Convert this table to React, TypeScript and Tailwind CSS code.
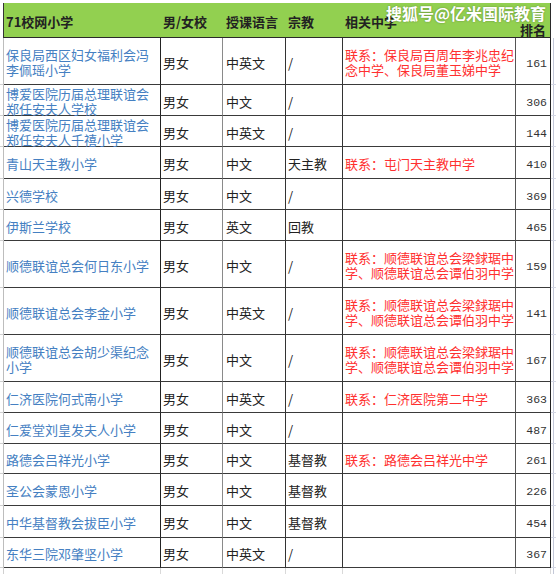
import React from 'react';

type Row = {
  name: string[];
  lang: string;
  rel: string;
  link?: string[];
  rank: string;
  h: string;
};

const rows: Row[] = [
  { name: ['保良局西区妇女福利会冯', '李佩瑶小学'], lang: '中英文', rel: '/', link: ['联系：保良局百周年李兆忠纪', '念中学、保良局董玉娣中学'], rank: '161', h: 'h-[47px]' },
  { name: ['博爱医院历届总理联谊会', '郑任安夫人学校'], lang: '中文', rel: '/', rank: '306', h: 'h-[31px]' },
  { name: ['博爱医院历届总理联谊会', '郑任安夫人千禧小学'], lang: '中英文', rel: '/', rank: '144', h: 'h-[31px]' },
  { name: ['青山天主教小学'], lang: '中文', rel: '天主教', link: ['联系：屯门天主教中学'], rank: '410', h: 'h-[32px]' },
  { name: ['兴德学校'], lang: '中文', rel: '/', rank: '369', h: 'h-[31px]' },
  { name: ['伊斯兰学校'], lang: '英文', rel: '回教', rank: '465', h: 'h-[31px]' },
  { name: ['顺德联谊总会何日东小学'], lang: '中文', rel: '/', link: ['联系：顺德联谊总会梁銶琚中', '学、顺德联谊总会谭伯羽中学'], rank: '159', h: 'h-[47px]' },
  { name: ['顺德联谊总会李金小学'], lang: '中英文', rel: '/', link: ['联系：顺德联谊总会梁銶琚中', '学、顺德联谊总会谭伯羽中学'], rank: '141', h: 'h-[47px]' },
  { name: ['顺德联谊总会胡少渠纪念', '小学'], lang: '中文', rel: '/', link: ['联系：顺德联谊总会梁銶琚中', '学、顺德联谊总会谭伯羽中学'], rank: '167', h: 'h-[47px]' },
  { name: ['仁济医院何式南小学'], lang: '中英文', rel: '/', link: ['联系：仁济医院第二中学'], rank: '363', h: 'h-[31px]' },
  { name: ['仁爱堂刘皇发夫人小学'], lang: '中文', rel: '/', rank: '487', h: 'h-[31px]' },
  { name: ['路德会吕祥光小学'], lang: '中文', rel: '基督教', link: ['联系：路德会吕祥光中学'], rank: '261', h: 'h-[30px]' },
  { name: ['圣公会蒙恩小学'], lang: '中文', rel: '基督教', rank: '226', h: 'h-[32px]' },
  { name: ['中华基督教会拔臣小学'], lang: '中文', rel: '基督教', rank: '454', h: 'h-[32px]' },
  { name: ['东华三院邓肇坚小学'], lang: '中英文', rel: '/', rank: '367', h: 'h-[30px]' },
];

const cell = 'flex items-center pt-[2px] border-b border-b-[#3a3a3a] leading-[15px]';

export default function App() {
  return (
    <div
      className="relative w-[556px] h-[574px] overflow-hidden bg-white pt-[3px] text-[13px] text-[#222]"
      style={{ fontFamily: '"Noto Sans CJK SC", "Noto Sans", sans-serif' }}
    >
      {/* header */}
      <div className="flex h-[35px]">
        <div className="w-[4px] border-r border-[#333]" />
        <div className="flex w-[547px] bg-[#92d050] border-b border-r border-[#2a2a2a] font-bold">
          <div className="w-[157px] pl-[2px] pt-[3px] flex items-center">71校网小学</div>
          <div className="w-[62px] pl-[2px] pt-[3px] flex items-center">男/女校</div>
          <div className="w-[63px] pl-[3px] pt-[3px] flex items-center whitespace-nowrap">授课语言</div>
          <div className="w-[57px] pl-[2px] pt-[3px] flex items-center">宗教</div>
          <div className="w-[173px] pl-[2px] pt-[3px] flex items-center">相关中学</div>
          <div className="w-[34px] flex flex-col items-center justify-end pb-[1px] leading-[12px]">
            <span>排名</span>
          </div>
        </div>
        <div className="w-[5px]" />
      </div>

      {rows.map((r, i) => (
        <div key={i} className={`flex ${r.h}`}>
          <div className="w-[4px] border-r border-r-[#bdbdbd] border-b border-b-[#d0d0d0]" />
          <div className={`${cell} w-[157px] pl-[2px] border-r border-r-[#222] text-[#4580c2]`}>
            <div>
              {r.name.map((l) => (
                <div key={l} className="whitespace-nowrap">{l}</div>
              ))}
            </div>
          </div>
          <div className={`${cell} w-[62px] pl-[2px] border-r border-r-[#8a8a8a]`}>男女</div>
          <div className={`${cell} w-[63px] pl-[3px] border-r border-r-[#333]`}>{r.lang}</div>
          <div className={`${cell} w-[57px] pl-[2px] border-r border-r-[#333]`}>{r.rel}</div>
          <div className={`${cell} w-[173px] pl-[2px] border-r border-r-[#555] text-[#ff3030]`}>
            {r.link && (
              <div>
                {r.link.map((l) => (
                  <div key={l} className="whitespace-nowrap">{l}</div>
                ))}
              </div>
            )}
          </div>
          <div
            className={`${cell} w-[35px] justify-end pr-[3px] pt-[4px] border-r border-r-[#222] text-[11.5px] text-[#333]`}
            style={{ fontFamily: '"Liberation Mono", monospace' }}
          >
            {r.rank}
          </div>
          <div className="w-[5px] border-b border-b-[#d5d8e4]">
            <div className="ml-[2px] h-full border-l border-l-[#c4c8d8]" />
          </div>
        </div>
      ))}

      {/* spill below the last row */}
      <div className="flex h-[6px]">
        <div className="w-[4px] border-r border-r-[#d0d0d0]" />
        <div className="w-[157px] border-r border-r-[#d9d9d9]" />
        <div className="w-[62px] border-r border-r-[#d9d9d9]" />
        <div className="w-[63px] border-r border-r-[#d9d9d9]" />
        <div className="w-[57px] border-r border-r-[#d9d9d9]" />
        <div className="w-[173px] border-r border-r-[#d9d9d9]" />
        <div className="w-[35px] border-r border-r-[#d9d9d9]" />
        <div className="w-[5px]">
          <div className="ml-[2px] h-full border-l border-l-[#c4c8d8]" />
        </div>
      </div>

      {/* watermark */}
      <div className="absolute top-[3px] left-[386px] text-[16px] leading-[20px] font-bold text-white whitespace-nowrap [text-shadow:0_0_2px_rgba(0,0,0,0.35)]">
        搜狐号@亿米国际教育
      </div>
    </div>
  );
}
